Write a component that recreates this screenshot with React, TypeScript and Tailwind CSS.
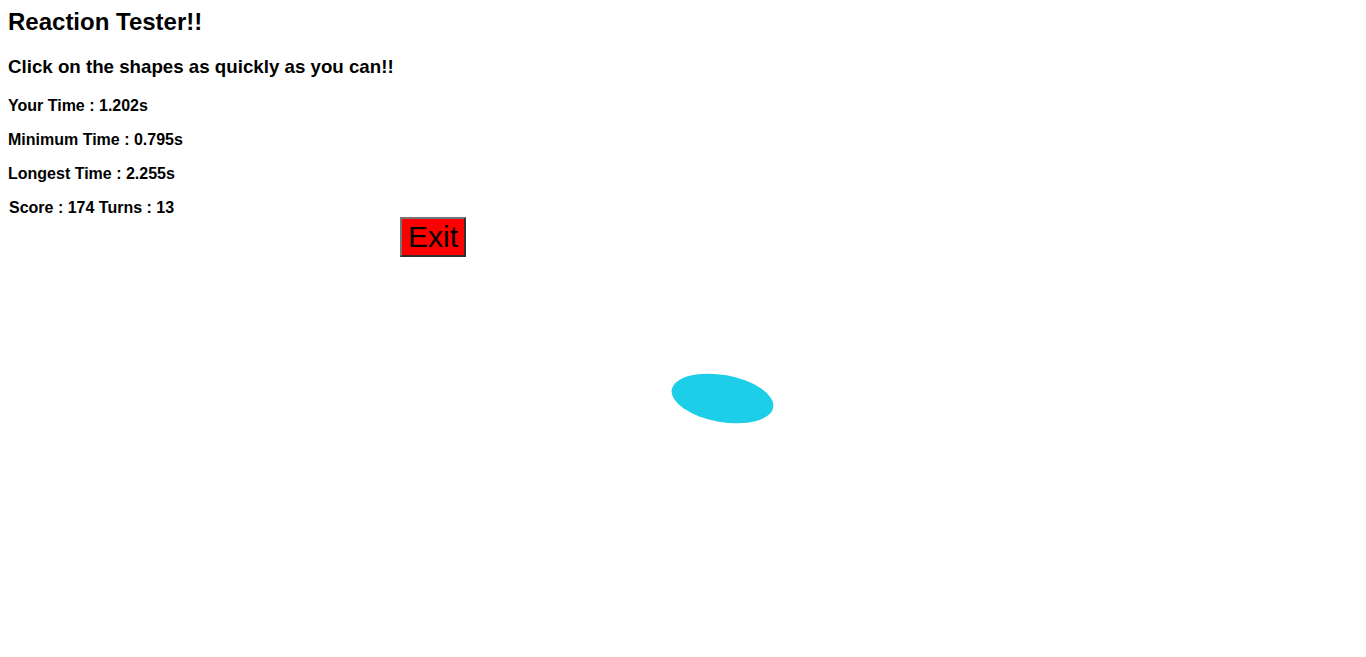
export default function App() {
  return (
    <div
      className="relative min-h-[657px] bg-white p-2 text-black"
      style={{ fontFamily: '"Liberation Sans", Arial, sans-serif' }}
    >
      <h2 className="m-0 text-[24px] font-bold leading-[28px]">Reaction Tester!!</h2>
      <h3 className="mt-[20px] mb-0 text-[18.72px] font-bold leading-[21.5px]">
        Click on the shapes as quickly as you can!!
      </h3>
      <p className="mt-[19px] mb-0 text-[16px] font-bold leading-[18px]">Your Time : 1.202s</p>
      <p className="mt-[16px] mb-0 text-[16px] font-bold leading-[18px]">Minimum Time : 0.795s</p>
      <p className="mt-[16px] mb-0 text-[16px] font-bold leading-[18px]">Longest Time : 2.255s</p>
      <p className="mt-[16px] mb-0 pl-px text-[16px] font-bold leading-[18px]">Score : 174 Turns : 13</p>
      <button
        className="ml-[392px] mt-0 border-2 border-t-[#767676] border-l-[#767676] border-b-[#2f2f2f] border-r-[#2f2f2f] bg-[#ff0000] px-[6px] py-px text-[30px] leading-[34px] text-black"
        style={{ fontFamily: '"Liberation Sans", Arial, sans-serif' }}
      >
        Exit
      </button>
      <div className="absolute left-[671px] top-[375px] h-[47px] w-[103px] rotate-[10deg] rounded-[50%] bg-[#1dcee8]" />
    </div>
  );
}
